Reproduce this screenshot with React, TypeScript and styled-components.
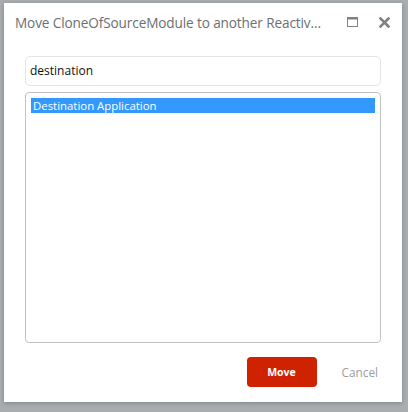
import React from "react";
import styled, { createGlobalStyle } from "styled-components";

const Global = createGlobalStyle`
  html, body { margin: 0; padding: 0; }
  body { width: 408px; height: 412px; overflow: hidden; background: #a7abad; font-family: "Open Sans", "Noto Sans", sans-serif; }
`;

const Backdrop = styled.div`
  width: 408px;
  height: 412px;
  box-sizing: border-box;
  padding: 3px 6px 10px 4px;
  background: #a9adaf;
`;

const Dialog = styled.div`
  width: 398px;
  height: 399px;
  background: #fff;
  box-shadow: 0 1px 4px rgba(0, 0, 0, 0.25);
  display: flex;
  flex-direction: column;
  box-sizing: border-box;
`;

const TitleBar = styled.div`
  display: flex;
  align-items: center;
  height: 38px;
  padding: 0 12px 0 11px;
`;

const Title = styled.div`
  flex: 1;
  min-width: 0;
  font-size: 13.6px;
  letter-spacing: -0.12px;
  color: #6a6f72;
  white-space: nowrap;
`;

const IconButton = styled.span<{ $gap: number }>`
  display: flex;
  align-items: center;
  justify-content: center;
  flex: none;
  width: 11px;
  height: 12px;
  margin-left: ${(p) => p.$gap}px;
`;

const Body = styled.div`
  padding: 15px 21px 0 21px;
  display: flex;
  flex-direction: column;
  gap: 6px;
`;

const Search = styled.div`
  height: 30px;
  box-sizing: border-box;
  border: 1px solid #e3e5e6;
  border-radius: 5px;
  display: flex;
  align-items: center;
  padding-left: 4px;
  padding-bottom: 1px;
  font-size: 12px;
  color: #111;
`;

const ListBox = styled.div`
  height: 251px;
  box-sizing: border-box;
  border: 1px solid #bfc3c5;
  border-radius: 4px;
  padding: 5px 5px;
`;

const Item = styled.div<{ $selected?: boolean }>`
  height: 15px;
  line-height: 15px;
  padding-left: 2px;
  font-size: 11.4px;
  color: ${(p) => (p.$selected ? "#fff" : "#222")};
  background: ${(p) => (p.$selected ? "#3399ff" : "transparent")};
`;

const Footer = styled.div`
  display: flex;
  align-items: center;
  justify-content: flex-end;
  padding: 14px 24px 0 0;
  gap: 25px;
`;

const PrimaryButton = styled.button`
  width: 70px;
  height: 30px;
  border: none;
  border-radius: 4px;
  background: #cf2200;
  color: #fff;
  font-family: "Open Sans", "Noto Sans", sans-serif;
  font-weight: 700;
  font-size: 10.5px;
  padding: 0;
`;

const LinkButton = styled.span`
  font-size: 11.8px;
  color: #9a9ea0;
`;

export default function App() {
  return (
    <>
      <Global />
      <Backdrop>
        <Dialog>
          <TitleBar>
            <Title>Move CloneOfSourceModule to another Reactiv...</Title>
            <IconButton $gap={20}>
              <svg width="11" height="10" viewBox="0 0 11 10">
                <rect x="0.5" y="0.5" width="10" height="9" fill="none" stroke="#7d8284" />
                <rect x="0.5" y="0.5" width="10" height="2" fill="#7d8284" />
              </svg>
            </IconButton>
            <IconButton $gap={21}>
              <svg width="11" height="11" viewBox="0 0 11 11">
                <path d="M1.5 1.5 L9.5 9.5 M9.5 1.5 L1.5 9.5" stroke="#7d8284" strokeWidth="2.6" strokeLinecap="square" />
              </svg>
            </IconButton>
          </TitleBar>
          <Body>
            <Search>destination</Search>
            <ListBox>
              <Item $selected>Destination Application</Item>
            </ListBox>
          </Body>
          <Footer>
            <PrimaryButton>Move</PrimaryButton>
            <LinkButton>Cancel</LinkButton>
          </Footer>
        </Dialog>
      </Backdrop>
    </>
  );
}
